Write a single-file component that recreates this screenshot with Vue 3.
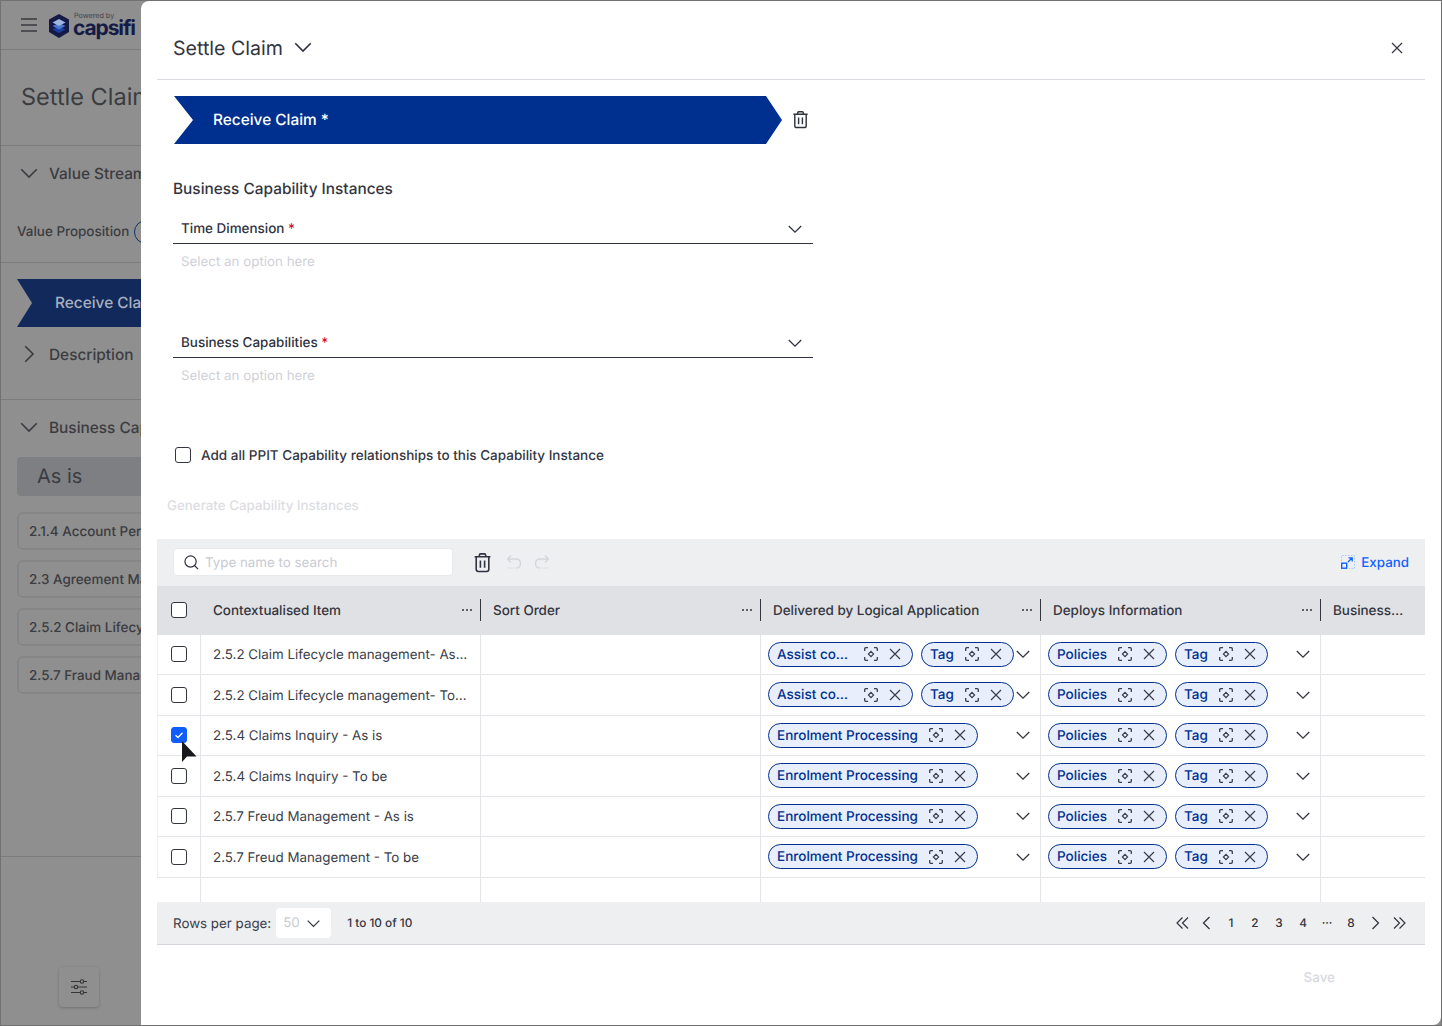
<script setup>
const sideItems = ['2.1.4 Account Performance', '2.3 Agreement Management', '2.5.2 Claim Lifecycle Management', '2.5.7 Fraud Management']
const columns = [
  { name: 'Contextualised Item', menu: true },
  { name: 'Sort Order', menu: true },
  { name: 'Delivered by Logical Application', menu: true },
  { name: 'Deploys Information', menu: true },
  { name: 'Business…', menu: false }
]
const assist = [{ text: 'Assist co…', narrow: true }, { text: 'Tag' }]
const enrol = [{ text: 'Enrolment Processing' }]
const rows = [
  { name: '2.5.2 Claim Lifecycle management- As is', apps: assist },
  { name: '2.5.2 Claim Lifecycle management- To be', apps: assist },
  { name: '2.5.4 Claims Inquiry - As is', apps: enrol, checked: true },
  { name: '2.5.4 Claims Inquiry - To be', apps: enrol },
  { name: '2.5.7 Freud Management - As is', apps: enrol },
  { name: '2.5.7 Freud Management - To be', apps: enrol }
]
const info = [{ text: 'Policies' }, { text: 'Tag' }]
const pages = ['1', '2', '3', '4', '···', '8']
</script>

<template>
  <div class="root">
    <svg class="defs" aria-hidden="true">
      <symbol id="i-down" viewBox="0 0 16 16"><path d="M1.800 5 8 11.200 14.200 5" fill="none" stroke="currentColor" stroke-width="1.300" /></symbol>
      <symbol id="i-right" viewBox="0 0 16 16"><path d="M5 1.800 11.200 8 5 14.200" fill="none" stroke="currentColor" stroke-width="1.300" /></symbol>
      <symbol id="i-left" viewBox="0 0 16 16"><path d="M10.500 2 4.500 8 10.500 14" fill="none" stroke="currentColor" stroke-width="1.300" /></symbol>
      <symbol id="i-next" viewBox="0 0 16 16"><path d="M5.500 2 11.500 8 5.500 14" fill="none" stroke="currentColor" stroke-width="1.300" /></symbol>
      <symbol id="i-first" viewBox="0 0 16 16"><path d="M7.500 2.500 2 8 7.500 13.500M13 2.500 7.500 8 13 13.500" fill="none" stroke="currentColor" stroke-width="1.200" /></symbol>
      <symbol id="i-last" viewBox="0 0 16 16"><path d="M3 2.500 8.500 8 3 13.500M8.500 2.500 14 8 8.500 13.500" fill="none" stroke="currentColor" stroke-width="1.200" /></symbol>
      <symbol id="i-x" viewBox="0 0 14 14"><path d="M2 2 12 12M12 2 2 12" fill="none" stroke="currentColor" stroke-width="1.200" /></symbol>
      <symbol id="i-target" viewBox="0 0 14 14">
        <path d="M.7 4V1.800Q.7.700 1.800.700H4M10 .700H12.200Q13.300.700 13.300 1.800V4M13.300 10V12.200Q13.300 13.300 12.200 13.300H10M4 13.300H1.800Q.7 13.300.7 12.200V10" fill="none" stroke="currentColor" stroke-width="1.300" />
        <path d="M7 4.400 9.600 7 7 9.600 4.400 7Z" fill="none" stroke="currentColor" stroke-width="1.200" />
      </symbol>
      <symbol id="i-trash" viewBox="0 0 20 20">
        <path d="M2.500 4.500H17.500M7 4.500V3Q7 1.800 8.200 1.800H11.800Q13 1.800 13 3V4.500M4 4.500V16.500Q4 18.500 6 18.500H14Q16 18.500 16 16.500V4.500M8 8V15M12 8V15" fill="none" stroke="currentColor" stroke-width="1.500" />
      </symbol>
      <symbol id="i-dots" viewBox="0 0 12 4"><circle cx="2" cy="2" r="1" fill="currentColor" /><circle cx="6" cy="2" r="1" fill="currentColor" /><circle cx="10" cy="2" r="1" fill="currentColor" /></symbol>
    </svg>

    <aside class="under">
      <div class="under-top">
        <svg class="burger" viewBox="0 0 16 14"><path d="M0 1H16M0 7H16M0 13H16" stroke="#3a3b40" stroke-width="1.300" /></svg>
        <svg class="hex" viewBox="0 0 20 24">
          <path d="M10 0 20 5.500V18L10 24 0 18V5.500Z" fill="#141a45" />
          <path d="M10 12.500 16.500 15.500 10 19 3.500 15.500Z" fill="#1c3f9e" />
          <path d="M10 9 16.500 12 10 15.500 3.500 12Z" fill="#4a76cf" />
          <path d="M10 5 16.500 8.500 10 12 3.500 8.500Z" fill="#9db6e4" />
        </svg>
        <div class="brand">
          <span class="powered">Powered by</span>
          <span class="capsifi">capsifi</span>
        </div>
      </div>
      <div class="under-title">Settle Claim</div>
      <div class="under-sec vs">
        <div class="sec-head"><svg class="sec-ic"><use href="#i-down" /></svg>Value Stream</div>
        <div class="vp">Value Proposition<span class="vp-badge"></span></div>
      </div>
      <div class="under-sec rc">
        <div class="under-banner">Receive Claim</div>
        <div class="sec-head desc"><svg class="sec-ic"><use href="#i-right" /></svg>Description</div>
      </div>
      <div class="under-sec bc">
        <div class="sec-head"><svg class="sec-ic"><use href="#i-down" /></svg>Business Capabilities</div>
        <div class="as-is">As is</div>
        <div v-for="s in sideItems" :key="s" class="side-item">{{ s }}</div>
      </div>
      <div class="tune-wrap">
        <button class="tune" aria-label="Settings">
          <svg viewBox="0 0 16 16" width="16" height="16">
            <path d="M0 2.500H16M0 8H16M0 13.500H16" stroke="#35363b" stroke-width="1.200" />
            <circle cx="11" cy="2.500" r="1.700" fill="#8f8f8f" stroke="#35363b" stroke-width="1.100" />
            <circle cx="5" cy="8" r="1.700" fill="#8f8f8f" stroke="#35363b" stroke-width="1.100" />
            <circle cx="11" cy="13.500" r="1.700" fill="#8f8f8f" stroke="#35363b" stroke-width="1.100" />
          </svg>
        </button>
      </div>
    </aside>

    <main class="modal">
      <header class="m-head">
        <h1 class="m-title">Settle Claim</h1>
        <svg class="title-chev"><use href="#i-down" /></svg>
        <svg class="close"><use href="#i-x" /></svg>
      </header>

      <div class="banner-row">
        <div class="banner">Receive Claim *</div>
        <svg class="banner-trash"><use href="#i-trash" /></svg>
      </div>

      <h2 class="sub">Business Capability Instances</h2>

      <div class="field">
        <div class="control"><span>Time Dimension <b>*</b></span><svg class="f-chev"><use href="#i-down" /></svg></div>
        <div class="hint">Select an option here</div>
      </div>
      <div class="field">
        <div class="control"><span>Business Capabilities <b>*</b></span><svg class="f-chev"><use href="#i-down" /></svg></div>
        <div class="hint">Select an option here</div>
      </div>

      <label class="add-all"><span class="cb"></span><span class="add-t">Add all PPIT Capability relationships to this Capability Instance</span></label>
      <div class="generate">Generate Capability Instances</div>

      <section class="grid">
        <div class="toolbar">
          <div class="search">
            <svg class="s-ic" viewBox="0 0 16 16"><circle cx="7" cy="7" r="6" fill="none" stroke="#2f3340" stroke-width="1.300" /><path d="M11.500 11.500 15 15" stroke="#2f3340" stroke-width="1.300" /></svg>
            <span>Type name to search</span>
          </div>
          <svg class="t-trash"><use href="#i-trash" /></svg>
          <svg class="t-hist first" viewBox="0 0 16 16"><path d="M5 1.500 1.500 5 5 8.500M1.500 5H10Q14.500 5 14.500 9.500T10 14" fill="none" stroke="#d5d6dc" stroke-width="1.300" /><path d="M2 14H8" stroke="#d5d6dc" stroke-width="1.300" stroke-dasharray="1 1.500" /></svg>
          <svg class="t-hist" viewBox="0 0 16 16"><path d="M11 1.500 14.500 5 11 8.500M14.500 5H6Q1.500 5 1.500 9.500T6 14" fill="none" stroke="#d5d6dc" stroke-width="1.300" /><path d="M8 14H14" stroke="#d5d6dc" stroke-width="1.300" stroke-dasharray="1 1.500" /></svg>
          <div class="expand">
            <svg viewBox="0 0 14 14" width="14" height="14">
              <path d="M.5 6V.5H13.500V13.500H8" fill="none" stroke="#a9c3fb" stroke-width="1" stroke-dasharray="1.500 1.500" />
              <rect x=".7" y="8.200" width="5" height="5" fill="none" stroke="#0f62fe" stroke-width="1.400" />
              <path d="M7 7 11 3M7.500 2.800H11.200V6.500" fill="none" stroke="#0f62fe" stroke-width="1.300" />
            </svg>
            <span>Expand</span>
          </div>
        </div>

        <div class="tr th">
          <div class="td c0"><span class="cb"></span></div>
          <div v-for="c in columns" :key="c.name" class="td hc">
            <span class="hc-name">{{ c.name }}</span>
            <svg v-if="c.menu" class="hc-dots"><use href="#i-dots" /></svg>
          </div>
        </div>

        <div v-for="r in rows" :key="r.name + r.checked" class="tr row">
          <div class="td c0">
            <span class="cb" :class="{ on: r.checked }">
              <svg v-if="r.checked" viewBox="0 0 10 10" width="10" height="10"><path d="M1.500 5.300 4 7.500 8.500 2.800" fill="none" stroke="#fff" stroke-width="1.300" /></svg>
            </span>
            <svg v-if="r.checked" class="cursor" viewBox="0 0 16 22"><path d="M1 0V21L6 15.500H15.500Z" fill="#17181c" /></svg>
          </div>
          <div class="td name"><span>{{ r.name }}</span></div>
          <div class="td"></div>
          <div class="td chips">
            <div class="chip-list">
              <span v-for="a in r.apps" :key="a.text" class="chip">
                <span class="chip-t" :class="{ narrow: a.narrow }">{{ a.text }}</span>
                <svg class="chip-i"><use href="#i-target" /></svg>
                <svg class="chip-i"><use href="#i-x" /></svg>
              </span>
            </div>
            <svg class="row-chev"><use href="#i-down" /></svg>
          </div>
          <div class="td chips">
            <div class="chip-list">
              <span v-for="a in info" :key="a.text" class="chip">
                <span class="chip-t">{{ a.text }}</span>
                <svg class="chip-i"><use href="#i-target" /></svg>
                <svg class="chip-i"><use href="#i-x" /></svg>
              </span>
            </div>
            <svg class="row-chev"><use href="#i-down" /></svg>
          </div>
          <div class="td"></div>
        </div>

        <div class="tr blank">
          <div class="td c0"></div>
          <div class="td"></div>
          <div class="td"></div>
          <div class="td"></div>
          <div class="td"></div>
          <div class="td"></div>
        </div>

        <footer class="pager">
          <span class="rpp">Rows per page:</span>
          <div class="rpp-sel"><span>50</span><svg><use href="#i-down" /></svg></div>
          <span class="count">1 to 10 of 10</span>
          <div class="pages">
            <svg class="pg-ic"><use href="#i-first" /></svg>
            <svg class="pg-ic"><use href="#i-left" /></svg>
            <span v-for="p in pages" :key="p" class="pg">{{ p }}</span>
            <svg class="pg-ic"><use href="#i-next" /></svg>
            <svg class="pg-ic"><use href="#i-last" /></svg>
          </div>
        </footer>
      </section>

      <div class="save-row"><span>Save</span></div>
    </main>
  </div>
</template>

<style>
html, body { margin: 0; background: #8f8f8f; }
</style>

<style scoped>
* { box-sizing: border-box; }
.root {
  width: 1442px;
  height: 1026px;
  display: flex;
  background: #8f8f8f;
  border: 1px solid #717171;
  font-family: Inter, "Liberation Sans", sans-serif;
  text-rendering: geometricPrecision;
  color: #2f3340;
  overflow: hidden;
  position: relative;
}
.defs { position: absolute; width: 0; height: 0; }

/* dimmed page */
.under { width: 140px; flex: none; overflow: hidden; color: #3b3c41; white-space: nowrap; display: flex; flex-direction: column; height: 1024px; }
.under-top { height: 49px; border-bottom: 1px solid #7c7c7c; display: flex; align-items: center; padding-left: 20px; width: 200px; flex: none; }
.burger { width: 16px; height: 14px; margin-right: 12px; flex: none; }
.hex { width: 20px; height: 24px; margin-top: 2px; flex: none; }
.brand { display: flex; flex-direction: column; margin-left: 4px; line-height: 1; }
.powered { font-size: 7.200px; color: #43444a; margin-left: 1px; margin-top: 1px; }
.capsifi { font-size: 21px; font-weight: 700; color: #161b45; letter-spacing: -1.100px; margin-top: -2px; }
.under-title { height: 96px; flex: none; width: 200px; padding: 31px 0 0 20px; font-size: 23.500px; line-height: 32px; border-bottom: 1px solid #7c7c7c; }
.under-sec { width: 200px; flex: none; border-bottom: 1px solid #7c7c7c; }
.vs { height: 117px; padding-top: 15px; }
.rc { height: 137px; padding: 16px 0 0 16px; }
.bc { height: 457px; padding-top: 15px; }
.sec-head { display: flex; align-items: center; height: 24px; font-size: 15.400px; font-weight: 500; padding-left: 18px; }
.sec-ic { width: 20px; height: 20px; margin-right: 10px; flex: none; }
.desc { margin: 15px 0 0 -16px; }
.vp { margin: 35px 0 0 16px; font-size: 13.450px; font-weight: 500; line-height: 20px; display: flex; align-items: center; gap: 5px; }
.vp-badge { width: 24px; height: 24px; border: 1.500px solid #13306e; border-radius: 50%; flex: none; }
.under-banner {
  width: 300px; height: 48px; background: #112a5b; color: #a9afbe;
  font-size: 15.400px; font-weight: 500; line-height: 48px; padding-left: 38px;
  clip-path: polygon(0 0, 100% 0, 100% 100%, 0 100%, 15px 50%);
}
.as-is { width: 200px; height: 39px; margin: 18px 0 16px 16px; background: #7e7f82; border-radius: 4px; font-size: 20px; line-height: 39px; padding-left: 20px; }
.side-item { width: 200px; height: 38px; margin: 0 0 10px 16px; border: 2px solid #858586; border-radius: 6px; font-size: 13.450px; font-weight: 500; line-height: 37px; padding-left: 10px; overflow: hidden; }
.tune-wrap { padding: 110px 0 0 58px; flex: none; }
.tune { width: 40px; height: 40px; border: 0; padding: 0; background: #8f8f8f; border-radius: 4px; box-shadow: 0 1px 3px rgba(0,0,0,.22); display: flex; align-items: center; justify-content: center; }

/* modal */
.modal { flex: 1; height: 1024px; background: #fff; border-radius: 8px 0 8px 0; padding: 0 16px; display: flex; flex-direction: column; z-index: 1; }
.m-head { height: 79px; flex: none; border-bottom: 1px solid #dcdde2; display: flex; align-items: center; padding: 15px 21px 0 16px; }
.m-title { margin: 0; font-size: 19.600px; font-weight: 400; line-height: 28px; color: #33363f; }
.title-chev { width: 20px; height: 20px; margin-left: 10px; margin-top: -1px; }
.close { width: 14px; height: 14px; margin-left: auto; color: #33363f; }
.banner-row { display: flex; align-items: center; margin-top: 16px; padding-left: 17px; height: 48px; flex: none; }
.banner {
  width: 608px; height: 48px; background: #00308f; color: #fff;
  font-size: 15.400px; font-weight: 500; line-height: 48px; padding-left: 39px;
  clip-path: polygon(0 0, 592px 0, 100% 50%, 592px 100%, 0 100%, 19px 50%);
}
.banner-trash { width: 19px; height: 19px; margin: -2px 0 0 9px; }
.sub { margin: 33px 0 13px 16px; font-size: 15.400px; font-weight: 500; line-height: 24px; color: #33363f; flex: none; }
.field { height: 114px; flex: none; margin-left: 16px; width: 640px; }
.control { height: 30px; border-bottom: 1px solid #2f3340; padding: 1px 10px 0 8px; display: flex; align-items: center; justify-content: space-between; font-size: 13.450px; font-weight: 500; }
.control b { color: #c8102e; font-weight: 500; }
.f-chev { width: 16px; height: 16px; margin-top: -1px; }
.hint { margin-top: 8px; padding-left: 8px; font-size: 13.350px; line-height: 20px; color: #d0d1d8; }
.add-all { margin: 0 0 0 18px; height: 26px; flex: none; display: flex; align-items: center; gap: 10px; font-size: 13.500px; font-weight: 500; color: #33363f; }
.add-t { margin-top: 2px; }
.generate { margin: 28px 0 0 10px; font-size: 13.350px; font-weight: 500; line-height: 20px; color: #dcdde2; flex: none; }
.cb { width: 16px; height: 16px; border: 1.500px solid #33363f; border-radius: 3px; background: #fff; display: flex; align-items: center; justify-content: center; flex: none; }
.cb.on { background: #0f5cff; border-color: #0f5cff; }

.grid { margin-top: 23px; flex: none; }
.toolbar { height: 47px; background: #eeeff1; display: flex; align-items: center; padding: 0 16px 1px; }
.search { width: 280px; height: 28px; background: #fff; border: 1px solid #e8e9ec; border-radius: 4px; display: flex; align-items: center; padding-left: 10px; font-size: 13.350px; color: #c9cbd3; }
.search span { margin-top: 2px; }
.s-ic { width: 15px; height: 15px; margin-right: 6px; flex: none; }
.t-trash { width: 21px; height: 21px; margin-left: 19px; }
.t-hist { width: 16px; height: 16px; margin-left: 12px; }
.t-hist.first { margin-left: 13px; }
.expand { margin-left: auto; display: flex; align-items: center; gap: 6px; font-size: 13.350px; font-weight: 500; color: #0f62fe; }
.expand span { margin-top: 1px; }

.tr { display: grid; grid-template-columns: 44px 280px 280px 280px 280px 104px; }
.th { height: 48.500px; background: #e0e1e5; font-size: 13.450px; font-weight: 500; color: #33363f; }
.hc { display: flex; align-items: center; padding: 0 8px 0 12px; position: relative; }
.hc-name { margin-top: 1px; }
.hc::after { content: ""; position: absolute; right: 0; top: 13px; width: 1px; height: 22px; background: #33363f; }
.hc:last-child::after { display: none; }
.hc-dots { width: 12px; height: 4px; margin-left: auto; }
.c0 { display: flex; align-items: center; padding-left: 14px; position: relative; }
.row { height: 40.500px; border-bottom: 1px solid #e4e5e9; border-left: 1px solid #eeeff1; grid-template-columns: 43px 280px 280px 280px 280px 104px; }
.row .td, .blank .td { border-right: 1px solid #e4e5e9; }
.row .c0 { padding-left: 13px; }
.row .td:last-child, .blank .td:last-child { border-right: 0; }
.blank { height: 24.500px; }
.name { display: flex; align-items: center; padding: 2px 11px 0 12px; font-size: 13.350px; color: #3b3e49; min-width: 0; }
.name span { overflow: hidden; text-overflow: ellipsis; white-space: nowrap; }
.chips { display: flex; align-items: center; padding: 0 9px 0 7px; }
.chip-list { display: flex; gap: 8px; }
.chip { height: 25px; border: 1px solid #00308f; border-radius: 13px; background: #e8eefc; color: #00308f; display: flex; align-items: center; padding: 0 10px 0 8px; font-size: 13.500px; font-weight: 500; white-space: nowrap; flex: none; }
.chip-t { margin: 1px 11px 0 0; }
.chip-t.narrow { width: 76px; }
.chip-i { width: 14px; height: 14px; color: #3b3e49; }
.chip-i + .chip-i { margin-left: 10px; }
.row-chev { width: 16px; height: 16px; margin-left: auto; color: #33363f; flex: none; }
.cursor { position: absolute; left: 23px; top: 25px; width: 16px; height: 22px; z-index: 2; }

.pager { height: 43px; background: #eeeff1; border-bottom: 1px solid #d5d6dc; display: flex; align-items: center; padding: 0 14px 0 16px; font-size: 13.350px; color: #3b3e49; }
.rpp { margin-top: 1px; }
.rpp-sel { width: 55px; height: 30px; margin-left: 5px; background: #fff; border-radius: 4px; display: flex; align-items: center; padding: 0 10px 0 7px; justify-content: space-between; color: #c9cbd3; }
.rpp-sel svg { width: 15px; height: 15px; color: #33363f; }
.count { margin-left: 16px; font-size: 11.800px; font-weight: 500; color: #33363f; }
.pages { margin-left: auto; display: flex; align-items: center; }
.pg, .pg-ic { width: 24px; text-align: center; font-size: 11.800px; font-weight: 500; color: #33363f; }
.pg-ic { height: 16px; }
.save-row { flex: 1; display: flex; justify-content: flex-end; padding: 23px 90px 0 0; font-size: 13.450px; font-weight: 500; line-height: 20px; color: #d9dae0; }
</style>
